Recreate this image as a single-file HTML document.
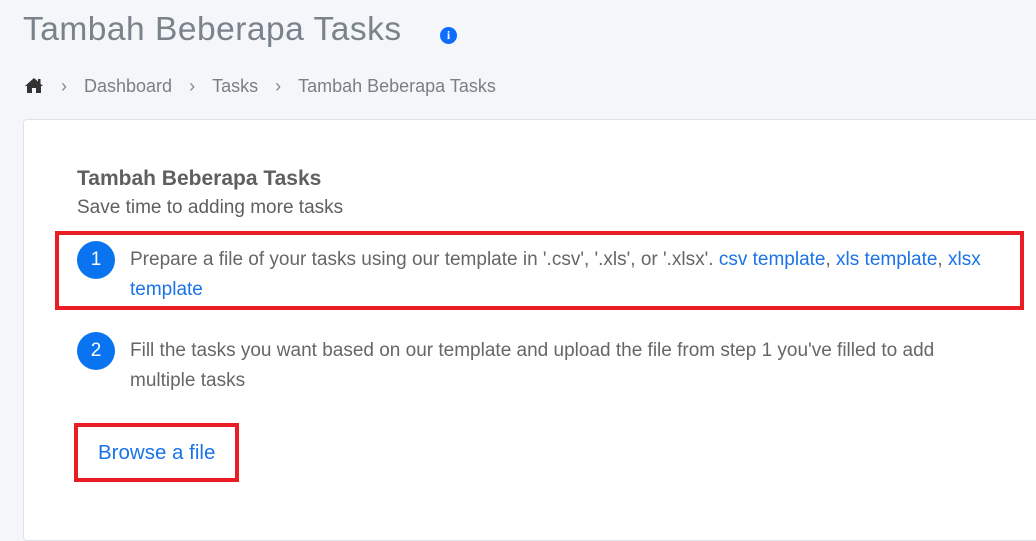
<!DOCTYPE html>
<html><head><style>
html,body{margin:0;padding:0;width:1036px;height:520px;overflow:hidden;background:#f4f6f9;font-family:"Liberation Sans",sans-serif;color:#6c6c6c}
.abs{position:absolute}
h1{position:absolute;left:23px;top:11px;margin:0;font-weight:normal;font-size:33.5px;color:#7a828b;letter-spacing:0.5px}
.info{left:440px;top:27px;width:17px;height:17px;border-radius:50%;background:#0d6efd;color:#fff;font:bold 12px "Liberation Serif",serif;text-align:center;line-height:17px}
.bc{left:24px;top:76px;font-size:18px;color:#7b7f84;white-space:nowrap}
.bc span{margin:0 17px;color:#888}
.card{left:23px;top:119px;width:1020px;height:420px;background:#fff;border:1px solid #dfe2e6;border-radius:4px}
.t1{left:77px;top:167px;font-size:21px;font-weight:bold;color:#5f5f5f}
.t2{left:77px;top:197px;font-size:19px;color:#5f5f5f}
.num{width:38px;height:38px;border-radius:50%;background:#0a74f0;color:#fff;font-size:19px;text-align:center;line-height:38px}
.txt{font-size:19px;line-height:30px;color:#666;width:870px}
a{color:#1a73e8;text-decoration:none}
.red{border:4px solid #ea1c24;box-sizing:border-box}
</style></head><body>
<h1>Tambah Beberapa Tasks</h1>
<div class="abs info">i</div>
<div class="abs bc"><svg width="20" height="17" viewBox="0 0 20 17" style="vertical-align:-2px"><path d="M10 1 L1 9 L3 9 L3 16 L8 16 L8 11 L12 11 L12 16 L17 16 L17 9 L19 9 Z" fill="#333"/><rect x="14" y="2" width="2.5" height="5" fill="#333"/></svg><span>›</span>Dashboard<span>›</span>Tasks<span>›</span>Tambah Beberapa Tasks</div>
<div class="abs card"></div>
<div class="abs t1">Tambah Beberapa Tasks</div>
<div class="abs t2">Save time to adding more tasks</div>
<div class="abs red" style="left:55px;top:231px;width:969px;height:79px"></div>
<div class="abs num" style="left:77px;top:241px">1</div>
<div class="abs txt" style="left:130px;top:245px">Prepare a file of your tasks using our template in '.csv', '.xls', or '.xlsx'. <a>csv template</a>, <a>xls template</a>, <a>xlsx template</a></div>
<div class="abs num" style="left:77px;top:332px">2</div>
<div class="abs txt" style="left:130px;top:336px">Fill the tasks you want based on our template and upload the file from step 1 you've filled to add multiple tasks</div>
<div class="abs red" style="left:74px;top:423px;width:165px;height:59px"></div>
<div class="abs" style="left:98px;top:441px;font-size:20.5px;color:#1a73e8">Browse a file</div>
</body></html>
